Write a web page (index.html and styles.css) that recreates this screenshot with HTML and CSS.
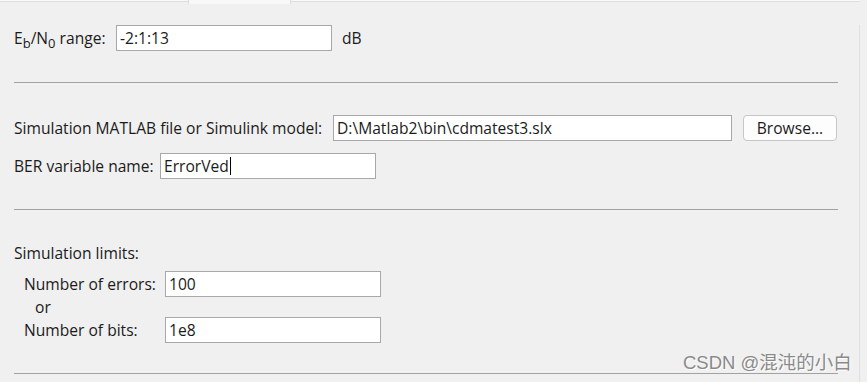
FILE: index.html
```html
<!DOCTYPE html>
<html lang="en">

<head>
    <meta charset="utf-8">
    <title>BER simulation settings</title>
    <link rel="stylesheet" href="styles.css">
</head>

<body>

    <div class="tabs">
        <div class="tab"></div>
        <div class="tab aktiv"></div>
        <div class="tab rest"></div>
    </div>

    <div class="panel">

        <div class="row first">
            <span class="label w-range">E<sub>b</sub>/N<sub>0</sub> range:</span>
            <div class="field w-small">-2:1:13</div>
            <span class="unit">dB</span>
        </div>

        <div class="line l1"></div>

        <div class="row r-model">
            <span class="label w-model">Simulation MATLAB file or Simulink model:</span>
            <div class="field w-path">D:\Matlab2\bin\cdmatest3.slx</div>
            <button class="browse">Browse...</button>
        </div>

        <div class="row r-ber">
            <span class="label w-ber">BER variable name:</span>
            <div class="field w-small">ErrorVed<span class="caret"></span></div>
        </div>

        <div class="line l2"></div>

        <div class="heading">Simulation limits:</div>

        <div class="limits">
            <div class="row">
                <span class="label w-limit">Number of errors:</span>
                <div class="field w-small">100</div>
            </div>
            <div class="or">or</div>
            <div class="row">
                <span class="label w-limit">Number of bits:</span>
                <div class="field w-small">1e8</div>
            </div>
        </div>

        <div class="line l3"></div>

    </div>

    <div class="watermark">CSDN @混沌的小白</div>

</body>

</html>
```

FILE: styles.css
```css
body {
    margin: 0;
    width: 867px;
    height: 382px;
    overflow: hidden;
    background-color: #f0f0f0;
    font-family: "Open Sans", "Noto Sans", sans-serif;
    font-size: 15.6px;
    color: #1b1b1b;
    position: relative;
}

/* fanerne foroven */
.tabs {
    display: flex;
    height: 4px;
    width: 860px;
}

.tab {
    width: 188px;
    height: 1px;
    background-color: #f9f9f9;
    border-bottom: 1px solid #dedede;
}

.tab.aktiv {
    width: 101px;
    height: 4px;
    border-bottom: none;
    border-left: 1px solid #dcdcdc;
    border-right: 1px solid #dcdcdc;
    background-color: #f8f8f8;
}

.tab.rest {
    flex: 1;
}

.panel {
    width: 860px;
    height: 376px;
    box-sizing: border-box;
    padding-left: 14px;
    border-right: 1px solid #e0e0e0;
}

.row {
    display: flex;
    align-items: center;
    height: 26px;
}

.first {
    margin-top: 21px;
}

.label {
    flex-shrink: 0;
    white-space: nowrap;
}

.label sub {
    font-size: 13px;
    vertical-align: -4px;
    line-height: 0;
}

.w-range {
    width: 102px;
}

.w-model {
    width: 319px;
}

.w-ber {
    width: 146px;
}

.w-limit {
    width: 141px;
}

.field {
    height: 26px;
    box-sizing: border-box;
    border: 1px solid #a8a8a8;
    background-color: #ffffff;
    padding-left: 3px;
    line-height: 24px;
    white-space: nowrap;
    display: flex;
    align-items: center;
}

.w-small {
    width: 216px;
}

.w-path {
    width: 399px;
}

.caret {
    display: inline-block;
    width: 1px;
    height: 18px;
    margin-left: 1px;
    background-color: #000;
}

.unit {
    margin-left: 10px;
}

.browse {
    margin-left: 11px;
    width: 94px;
    height: 26px;
    border: 1px solid #c6c6c6;
    border-radius: 4px;
    background-color: #fdfdfd;
    font-family: inherit;
    font-size: 15.6px;
    color: #1b1b1b;
    padding: 0;
}

.line {
    width: 824px;
    height: 1px;
    background-color: #a2a2a2;
}

.l1 {
    margin-top: 31px;
}

.r-model {
    margin-top: 32px;
}

.r-ber {
    margin-top: 12px;
}

.l2 {
    margin-top: 30px;
}

.heading {
    margin-top: 33px;
    line-height: 20px;
}

.limits {
    margin-top: 8px;
    padding-left: 10px;
}

.or {
    line-height: 20px;
    padding-left: 11px;
}

.l3 {
    margin-top: 30px;
}

.watermark {
    position: absolute;
    left: 683px;
    top: 353px;
    font-family: "Liberation Sans", "Noto Sans CJK SC", sans-serif;
    font-size: 18.5px;
    line-height: 20px;
    color: #8a8a8a;
    text-shadow: 1px 1px 0 #ffffff;
}
```
